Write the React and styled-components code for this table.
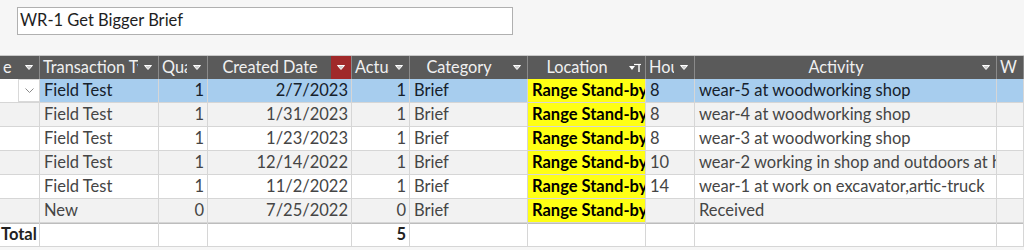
import React from 'react';
import styled, { createGlobalStyle } from 'styled-components';

const GlobalStyle = createGlobalStyle`
  body {
    margin: 0;
    background: #f6f6f6;
    font-family: Lato, "Open Sans", sans-serif;
  }
`;

const columns = '40px 119px 49px 144px 58px 118px 118px 49px 302px 1fr';

const rows = [
  ['Field Test', '1', '2/7/2023', '1', 'Brief', 'Range Stand-by', '8', 'wear-5 at woodworking shop'],
  ['Field Test', '1', '1/31/2023', '1', 'Brief', 'Range Stand-by', '8', 'wear-4 at woodworking shop'],
  ['Field Test', '1', '1/23/2023', '1', 'Brief', 'Range Stand-by', '8', 'wear-3 at woodworking shop'],
  ['Field Test', '1', '12/14/2022', '1', 'Brief', 'Range Stand-by', '10', 'wear-2 working in shop and outdoors at home'],
  ['Field Test', '1', '11/2/2022', '1', 'Brief', 'Range Stand-by', '14', 'wear-1 at work on excavator,artic-truck'],
  ['New', '0', '7/25/2022', '0', 'Brief', 'Range Stand-by', '', 'Received'],
];

const headers = [
  { label: 'e', align: 'left' },
  { label: 'Transaction Type', align: 'left' },
  { label: 'Quantity', align: 'left' },
  { label: 'Created Date', align: 'center', sorted: true },
  { label: 'Actual', align: 'left' },
  { label: 'Category', align: 'center' },
  { label: 'Location', align: 'center', filtered: true },
  { label: 'Hours', align: 'left' },
  { label: 'Activity', align: 'center' },
  { label: 'W', align: 'left', noArrow: true },
];

const Page = styled.div`
  padding-top: 7px;
`;

const TitleBox = styled.div`
  box-sizing: border-box;
  margin-left: 17px;
  width: 496px;
  height: 28px;
  border: 1px solid #b0b0b0;
  background: #fff;
  color: #1e1e1e;
  font-size: 16.5px;
  line-height: 25px;
  padding-left: 2px;
`;

const Sheet = styled.div`
  margin-top: 20px;
  background: #fff;
`;

const HeaderRow = styled.div`
  display: grid;
  grid-template-columns: ${columns};
  height: 24px;
  box-sizing: border-box;
  border-top: 1px solid #c9c9c9;
  background: #5a5a5a;
  color: #f0f0f0;
  font-size: 16.3px;
`;

const HeadCell = styled.div`
  display: flex;
  align-items: stretch;
  min-width: 0;
  border-right: 1px solid #8a8a8a;
`;

const HeadLabel = styled.span`
  flex: 1;
  min-width: 0;
  overflow: hidden;
  white-space: nowrap;
  padding: 0 2px 0 3px;
  line-height: 22px;
  text-align: ${(p) => p.$align};
`;

const ArrowBox = styled.span`
  flex: 0 0 20px;
  display: flex;
  align-items: center;
  justify-content: center;
  background: ${(p) => (p.$sorted ? '#a0292a' : 'transparent')};
`;

const Row = styled.div`
  display: grid;
  grid-template-columns: ${columns};
  height: 24px;
  box-sizing: border-box;
  border-bottom: 1px solid #d6d6d6;
  background: ${(p) => p.$bg};
  color: ${(p) => (p.$selected ? '#15202b' : '#454545')};
  font-size: 16.5px;
`;

const TotalRow = styled(Row)`
  box-shadow: inset 0 1px 0 #bdbdbd;
  color: #222;
`;

const Cell = styled.div`
  min-width: 0;
  overflow: hidden;
  white-space: nowrap;
  border-right: 1px solid #d6d6d6;
  padding: 0 3px 0 4px;
  line-height: 23px;
  text-align: ${(p) => p.$align || 'left'};
  background: ${(p) => p.$bg || 'transparent'};
  font-weight: ${(p) => (p.$bold ? 700 : 400)};
  color: ${(p) => (p.$dark ? '#000' : 'inherit')};
`;

const TotalLabel = styled(Cell)`
  overflow: visible;
  padding-left: 1px;
`;

const SelectorCell = styled.div`
  display: flex;
  justify-content: flex-end;
  align-items: stretch;
  background: #fff;
  border-right: 1px solid #d6d6d6;
`;

const ComboButton = styled.span`
  width: 21px;
  display: flex;
  align-items: center;
  justify-content: center;
  box-sizing: border-box;
  border: 1px solid #d9d9d9;
  border-right: none;
  background: #fff;
`;

const FilterArrow = () => (
  <svg width="8" height="5" viewBox="0 0 8 5">
    <polygon points="0.5,0.5 7.5,0.5 4,4.5" fill="#cfcfcf" stroke="#fff" strokeWidth="1" />
  </svg>
);

const FilterOnIcon = () => (
  <svg width="13" height="9" viewBox="0 0 13 9">
    <polygon points="0,3 6,3 3,7" fill="#fff" />
    <path d="M5 1.5 H12" stroke="#fff" strokeWidth="1.2" />
    <path d="M10 1.5 V9" stroke="#fff" strokeWidth="1.4" />
  </svg>
);

const Chevron = () => (
  <svg width="9" height="6" viewBox="0 0 9 6">
    <path d="M0.5 0.5 L4.5 4.5 L8.5 0.5" fill="none" stroke="#8a8a8a" strokeWidth="1" />
  </svg>
);

const App = () => {
  return (
    <Page>
      <GlobalStyle />
      <TitleBox>WR-1 Get Bigger Brief</TitleBox>
      <Sheet>
        <HeaderRow>
          {headers.map((h, i) => (
            <HeadCell key={i}>
              <HeadLabel $align={h.align}>{h.label}</HeadLabel>
              {!h.noArrow && (
                <ArrowBox $sorted={h.sorted}>
                  {h.filtered ? <FilterOnIcon /> : <FilterArrow />}
                </ArrowBox>
              )}
            </HeadCell>
          ))}
        </HeaderRow>
        {rows.map((r, i) => {
          const selected = i === 0;
          const bg = selected ? '#a7cdee' : i % 2 === 1 ? '#f2f2f2' : '#fff';
          return (
            <Row key={i} $bg={bg} $selected={selected}>
              {selected ? (
                <SelectorCell>
                  <ComboButton>
                    <Chevron />
                  </ComboButton>
                </SelectorCell>
              ) : (
                <Cell />
              )}
              <Cell>{r[0]}</Cell>
              <Cell $align="right">{r[1]}</Cell>
              <Cell $align="right">{r[2]}</Cell>
              <Cell $align="right">{r[3]}</Cell>
              <Cell>{r[4]}</Cell>
              <Cell $bg="#ffff14" $bold $dark>{r[5]}</Cell>
              <Cell>{r[6]}</Cell>
              <Cell>{r[7]}</Cell>
              <Cell />
            </Row>
          );
        })}
        <TotalRow $bg="#fff">
          <TotalLabel $bold>Total</TotalLabel>
          <Cell />
          <Cell />
          <Cell />
          <Cell $align="right" $bold>5</Cell>
          <Cell />
          <Cell />
          <Cell />
          <Cell />
          <Cell />
        </TotalRow>
      </Sheet>
    </Page>
  );
};

export default App;
